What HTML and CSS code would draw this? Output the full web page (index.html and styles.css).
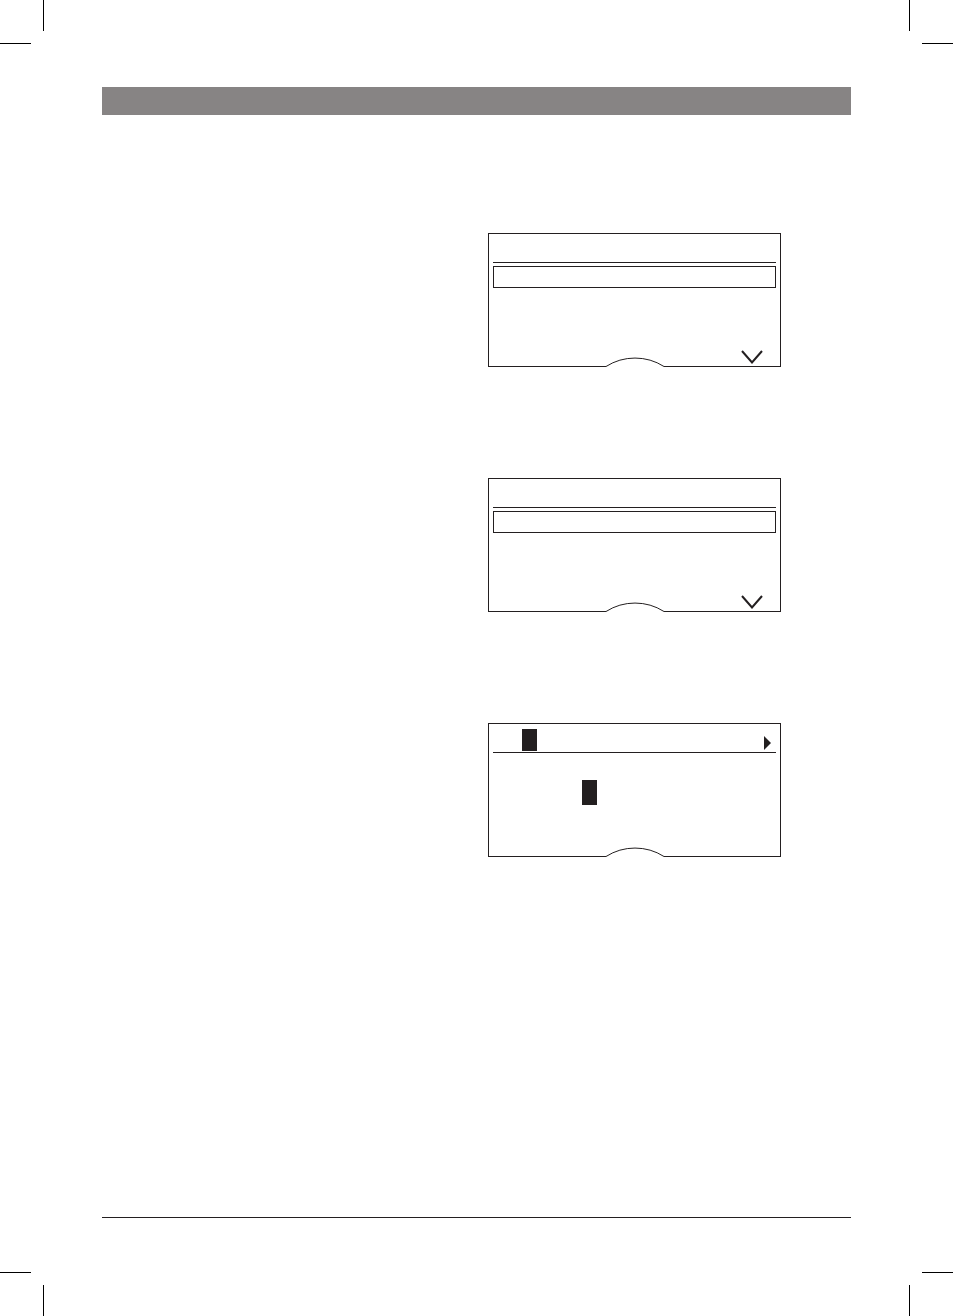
FILE: index.html
```html
<!DOCTYPE html>
<html lang="en">
<head>
<meta charset="utf-8">
<meta name="viewport" content="width=device-width, initial-scale=1">
<title>Display screens</title>
<link rel="stylesheet" href="styles.css">
</head>
<body>
<div class="page">
  <svg class="crop crop-tl" viewBox="0 0 44 44" aria-hidden="true"><path d="M43 0h1v31h-1zM0 43h31v1H0z"/></svg>
  <svg class="crop crop-tr" viewBox="0 0 44 44" aria-hidden="true"><path d="M0 0h1v31H0zM13 43h31v1H13z"/></svg>
  <svg class="crop crop-bl" viewBox="0 0 44 44" aria-hidden="true"><path d="M43 13h1v31h-1zM0 0h31v1H0z"/></svg>
  <svg class="crop crop-br" viewBox="0 0 44 44" aria-hidden="true"><path d="M0 13h1v31H0zM13 0h31v1H13z"/></svg>

  <header class="band"></header>

  <main class="content">
    <div class="screens">
      <section class="screen">
        <div class="title"></div>
        <div class="selected"></div>
        <div class="base">
          <div class="edge"></div>
          <svg class="dial" viewBox="0 0 58 10" aria-hidden="true"><path d="M0 9.5A54 54 0 0 1 58 9.5"/></svg>
          <div class="edge"><svg class="chevron" viewBox="0 0 22 14" aria-hidden="true"><path d="M1 1L11 12.5L21 1"/></svg></div>
        </div>
      </section>

      <section class="screen">
        <div class="title"></div>
        <div class="selected"></div>
        <div class="base">
          <div class="edge"></div>
          <svg class="dial" viewBox="0 0 58 10" aria-hidden="true"><path d="M0 9.5A54 54 0 0 1 58 9.5"/></svg>
          <div class="edge"><svg class="chevron" viewBox="0 0 22 14" aria-hidden="true"><path d="M1 1L11 12.5L21 1"/></svg></div>
        </div>
      </section>

      <section class="screen">
        <div class="title entry">
          <span class="cursor"></span>
          <svg class="arrow" viewBox="0 0 7 14" aria-hidden="true"><path d="M0 0L7 7L0 14z"/></svg>
        </div>
        <div class="letters"><span class="cursor cursor-tall"></span></div>
        <div class="base">
          <div class="edge"></div>
          <svg class="dial" viewBox="0 0 58 10" aria-hidden="true"><path d="M0 9.5A54 54 0 0 1 58 9.5"/></svg>
          <div class="edge"></div>
        </div>
      </section>
    </div>
  </main>

  <footer class="foot"></footer>
</div>
</body>
</html>
```
FILE: styles.css
```css
* {
  box-sizing: border-box;
}

:root {
  --ink: #231f20;
  --band: #878484;
}

body {
  margin: 0;
  background: #fff;
  font-family: "Liberation Sans", Arial, sans-serif;
}

.page {
  position: relative;
  display: flex;
  flex-direction: column;
  min-height: 100vh;
  padding: 87px 102px 0;
}

/* Printer's crop marks in the sheet corners */
.crop {
  position: absolute;
  width: 44px;
  height: 44px;
  fill: #000;
}

.crop-tl { top: 0; left: 0; }
.crop-tr { top: 0; right: 0; }
.crop-bl { bottom: 0; left: 0; }
.crop-br { bottom: 0; right: 0; }

.band {
  height: 28px;
  background: var(--band);
}

.content {
  flex: 1;
  display: grid;
  grid-template-columns: 386fr 293fr 70fr;
  align-items: start;
  padding: 118px 0;
}

.screens {
  grid-column: 2;
  display: flex;
  flex-direction: column;
  gap: 111px;
}

.screen {
  display: flex;
  flex-direction: column;
  min-height: 134px;
  border: 1px solid var(--ink);
  border-bottom: 0;
}

.title {
  height: 29px;
  margin: 0 4px;
  border-bottom: 1px solid var(--ink);
}

.selected {
  height: 22px;
  margin: 3px 4px 0;
  border: 1px solid var(--ink);
}

.entry {
  display: flex;
  align-items: flex-start;
  justify-content: space-between;
  padding: 5px 5px 0 29px;
}

.cursor {
  width: 15px;
  height: 22px;
  background: var(--ink);
}

.cursor-tall {
  height: 25px;
}

.arrow {
  width: 7px;
  height: 14px;
  margin-top: 7px;
  fill: var(--ink);
}

.letters {
  display: flex;
  padding: 27px 93px 0;
}

/* Bottom edge, arched over the dial in the middle */
.base {
  display: flex;
  align-items: flex-end;
  margin-top: auto;
}

.edge {
  flex: 1;
  display: flex;
  justify-content: flex-end;
  padding: 0 17px 2px 0;
  border-bottom: 1px solid var(--ink);
}

.dial {
  width: 58px;
  height: 10px;
  fill: none;
  stroke: var(--ink);
}

.chevron {
  width: 22px;
  height: 14px;
  fill: none;
  stroke: var(--ink);
  stroke-width: 2;
}

.foot {
  height: 99px;
  border-top: 1px solid var(--ink);
}
```
